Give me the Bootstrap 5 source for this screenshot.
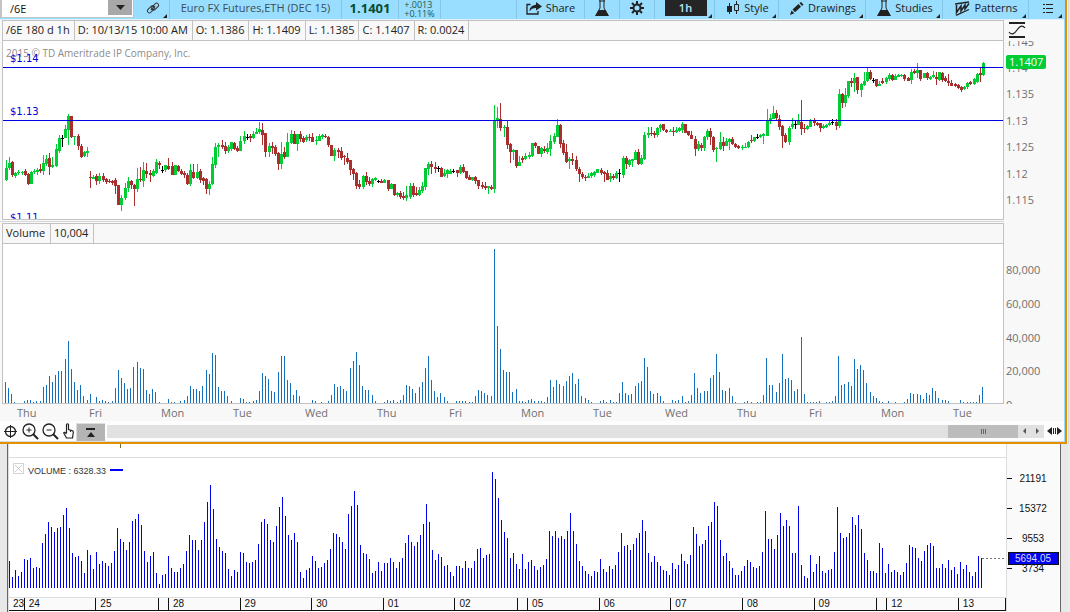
<!DOCTYPE html>
<html lang="en">
<head>
<meta charset="utf-8">
<meta name="viewport" content="width=device-width, initial-scale=1">
<title>/6E chart</title>
<link href="https://cdn.jsdelivr.net/npm/bootstrap@5.3.0/dist/css/bootstrap.min.css" rel="stylesheet">
<style>
  body { font-family: "Open Sans", sans-serif; font-size: 11px; line-height: 16px; color: #222; background: #ececec; overflow: hidden; }
  svg { display: block; flex: none; }
  svg.plot { width: 100%; shape-rendering: crispEdges; }
  .upper { border-right: 2px solid #e09000; border-bottom: 2px solid #e09000; margin-right: 3px; background: #f8f8f8; box-shadow: 1px 0 0 #f8f8f8, 2px 0 0 #d8d8d8; }
  .upper-inner { border-right: 1px solid #99ddff; }

  .toolbar { height: 20px; background: #99ddff; border-bottom: 1px solid #dff2fc; overflow: hidden; }
  .tool { height: 19px; padding: 0 0 3px; border: 0; border-right: 1px solid #83c6ea; background: transparent; color: #222; position: relative; display: flex; align-items: center; justify-content: center; line-height: 16px; white-space: nowrap; flex: none; }
  .tool.menu { padding-left: 2px; }
  .tool.menu::after { content: ""; position: absolute; right: 2px; bottom: 1px; border-left: 4px solid transparent; border-bottom: 4px solid #222; }
  .symbol-box { width: 134px; height: 18px; padding: 0 1px 1px 2px; background: #c4c4c4; }
  .symbol-box input { min-width: 0; width: 0; border: 0; padding: 0 0 0 8px; height: 17px; font-size: 11px; border-radius: 0; color: #111; outline: 0; background: #fff; }
  .symbol-box button { width: 25px; height: 17px; border: 1px solid #fff; border-width: 0 1px 2px 0; background: #a8a8a8; padding: 0; flex: none; }
  .quote-price { font-weight: 700; font-size: 13px; color: #064d2d; }
  .tool.quote-change { font-size: 9px; line-height: 9px; color: #1d5a48; padding-bottom: 2px; }
  .interval { background: #252525; color: #b5e5ff; width: 42px; height: 16px; text-align: center; line-height: 15px; font-weight: 600; }

  .head { height: 21px; border: 1px solid #c2c2c2; margin-left: 2px; background: #f8f8f8; }
  .head span { border-right: 1px solid #c2c2c2; padding: 0 4px 0 3px; line-height: 18px; white-space: nowrap; }
  .head.wide span { padding-right: 5px; }
  .pane { border-left: 1px solid #c2c2c2; border-right: 1px solid #c2c2c2; border-bottom: 1px solid #c2c2c2; background: #fff; position: relative; margin-left: 2px; }
  .over { position: absolute; left: 0; top: 0; width: 100%; height: 100%; pointer-events: none; }
  .scale { width: 60px; flex: none; }
  .scale text { fill: #707070; }
  .days { height: 17px; padding: 1px 0 0 17px; margin-right: 39px; color: #707070; }
  .scrollrow { height: 21px; background: #fdfdfd; border-bottom: 1px solid #d8dde0; }
  .iconbtn { border: 0; padding: 0; background: transparent; width: 20px; height: 20px; display: flex; align-items: center; justify-content: center; flex: none; }
  .track { height: 13px; background: #e1e1e1; }
  .thumb { width: 70px; height: 13px; background: #bcbcbc; }

  .lower { font-family: "Liberation Sans", sans-serif; font-size: 10px; line-height: 12px; color: #111; margin-right: 2px; background: #e8e8e8; }
  .lower-frame { margin: 0 7px 0 7px; border-left: 1px solid #666; border-right: 1px solid #666; background: #fafafa; }
  .lower-plot { background: #fff; border-right: 1px solid #ddd; border-left: 1px solid #ddd; min-width: 0; }
  .blank { height: 14px; border-bottom: 1px solid #ddd; padding-left: 111px; }
  .blank i { display: block; width: 1px; height: 4px; background: #6b6b2b; }
  .legend { padding: 5px 0 0 4px; gap: 4px; font-size: 9px; color: #333; }
  .legend span { padding-top: 2px; }
  .closebox { width: 11px; height: 11px; padding: 0; border: 1px solid #d4d4d4; background: #fff; }
  .dates { height: 14px; border-top: 1px solid #ddd; border-bottom: 1px solid #111; background: #fafafa; }
  .dates span { border-right: 1px solid #111; text-indent: 4px; flex-basis: 0; min-width: 0; overflow: hidden; }
</style>
</head>
<body>
<main>
<section class="upper" aria-label="Price chart">
<div class="upper-inner">
  <div class="toolbar d-flex">
    <div class="symbol-box d-flex flex-shrink-0">
      <input class="flex-grow-1" type="text" value="/6E" aria-label="Symbol">
      <button type="button" aria-label="Choose symbol"><svg class="mx-auto" width="9" height="5"><path d="M0 0h9L4.500 5z" fill="#222"/></svg></button>
    </div>
    <button class="tool menu" style="width:36px" type="button" aria-label="Link">
      <svg width="14" height="14" viewBox="0 0 14 14" fill="none" stroke="#333"><g transform="rotate(-45 7 7)"><rect x="0.500" y="4.500" width="8" height="4" rx="2"/><rect x="5.500" y="5.500" width="8" height="4" rx="2"/><path d="M4 7h6"/></g></svg>
    </button>
    <div class="tool" style="width:172px;color:#3c4d57">Euro FX Futures,ETH (DEC 15)</div>
    <div class="tool quote-price" style="width:57px">1.1401</div>
    <div class="tool quote-change" style="width:42px"><div>+.0013<br>+0.11%</div></div>
    <div class="tool flex-grow-1"></div>
    <button class="tool" style="width:68px" type="button">
      <svg class="me-1" width="16" height="13" viewBox="0 0 16 13"><path d="M4.500 2.500H1v9.500h11V9" fill="none" stroke="#222" stroke-width="1.300"/><path d="M10 0l6 4.500-6 4V6C7 6 5 7 3.500 9.500 3.500 5.500 6 3 10 2.700z" fill="#222"/></svg>Share
    </button>
    <button class="tool" style="width:35px" type="button" aria-label="Lab">
      <svg width="14" height="17" viewBox="0 0 14 17"><path d="M5 0v8L1 15.500h12L9 8V0" fill="none" stroke="#222"/><path d="M3.500 10h7L14 16H0z" fill="#222"/><path d="M4 1h6" stroke="#222"/></svg>
    </button>
    <button class="tool" style="width:35px" type="button" aria-label="Settings">
      <svg width="14" height="14" viewBox="0 0 14 14" fill="none" stroke="#222"><circle cx="7" cy="7" r="3.500" stroke-width="2"/><path d="M7 0v3M7 11v3M0 7h3M11 7h3M2 2l2 2M10 10l2 2M2 12l2-2M10 4l2-2" stroke-width="2"/></svg>
    </button>
    <button class="tool menu" style="width:60px" type="button"><span class="interval">1h</span></button>
    <button class="tool menu" style="width:64px" type="button">
      <svg class="me-1" width="14" height="14" viewBox="0 0 14 14"><path d="M3.500 2v11M10.500 0v3M10.500 9v4" stroke="#222"/><path d="M1 5h5v6H1z" fill="#222"/><path d="M8.500 3.500h4v6h-4z" fill="none" stroke="#222"/></svg>Style
    </button>
    <button class="tool menu" style="width:87px" type="button">
      <svg class="me-1" width="14" height="13" viewBox="0 0 14 13"><path d="M0 13l1.500-4.500 2.800 2.800zM2.500 7.500L8.500 2l2.500 2.700-6 5.500zM9.500 1L11 0l2.500 2.500L12 4z" fill="#222"/></svg>Drawings
    </button>
    <button class="tool menu" style="width:77px" type="button">
      <svg class="me-1" width="14" height="17" viewBox="0 0 14 17"><path d="M5 0v8L1 15.500h12L9 8V0" fill="none" stroke="#222"/><path d="M3.500 10h7L14 16H0z" fill="#222"/><path d="M4 1h6" stroke="#222"/></svg>Studies
    </button>
    <button class="tool menu" style="width:86px" type="button">
      <svg class="me-1" width="15" height="15" viewBox="0 0 15 15" fill="none" stroke="#222"><path d="M0 3L14 1M1 14.300L14 8.500" stroke-width="1.300"/><path d="M1.500 4v7.500L6 5v5L10 4v4l4-5.500" stroke-width="1.500"/></svg>Patterns
    </button>
    <button class="tool menu border-end-0" style="width:35px" type="button" aria-label="List">
      <svg width="10" height="10" stroke="#222" shape-rendering="crispEdges"><path d="M0 1.500h2M3 1.500h7M0 5.500h2M3 5.500h7M0 9.500h2M3 9.500h7"/></svg>
    </button>
  </div>

  <div class="d-flex">
    <div class="flex-grow-1" style="min-width:0">
      <div class="head d-flex">
        <span>/6E 180 d 1h</span><span>D: 10/13/15 10:00 AM</span><span>O: 1.1386</span><span>H: 1.1409</span><span>L: 1.1385</span><span>C: 1.1407</span><span>R: 0.0024</span>
      </div>
      <div class="pane">
        <svg id="price" class="plot" height="178" viewBox="3 -9 1000 178" preserveAspectRatio="none"></svg>
        <svg class="over">
          <text x="3" y="16" fill="#8c8c8c" font-size="10">2015 © TD Ameritrade IP Company, Inc.</text>
          <g fill="#0000d8" font-family="DejaVu Sans, sans-serif" font-size="10"><text x="7" y="21">$1.14</text><text x="7" y="74">$1.13</text><text x="7" y="180">$1.11</text></g>
        </svg>
      </div>
    </div>
    <svg class="scale" height="200">
      <path d="M5 3h16M5 17h16" stroke="#222" stroke-width="2"/><path d="M5 12c3 4 6 1 8-2s5-6 8-2" fill="none" stroke="#222" stroke-width="1.200"/>
      <svg y="21" height="179" width="60"><text x="2" y="5">1.145</text><text x="2" y="31">1.14</text></svg>
      <g><text x="2" y="78">1.135</text><text x="2" y="105">1.13</text><text x="2" y="131">1.125</text><text x="2" y="158">1.12</text><text x="2" y="184">1.115</text></g>
      <rect x="2" y="35" width="40" height="14" rx="2" fill="#00cc33"/><text x="5" y="46" style="fill:#fff">1.1407</text>
    </svg>
  </div>

  <div class="d-flex">
    <div class="flex-grow-1" style="min-width:0">
      <div style="height:3px" class="d-flex align-items-center"><div class="w-100" style="height:1px;background:#d8d8d8"></div></div>
      <div class="head wide d-flex"><span>Volume</span><span>10,004</span></div>
      <div class="pane"><svg id="volume" class="plot" height="159" viewBox="3 0 1000 159" preserveAspectRatio="none"></svg></div>
    </div>
    <svg class="scale" height="184"><text x="2" y="54">80,000</text><text x="2" y="88">60,000</text><text x="2" y="122">40,000</text><text x="2" y="155">20,000</text><text x="2" y="189">0</text></svg>
  </div>
  <div class="days d-flex">
    <span class="col">Thu</span><span class="col">Fri</span><span class="col">Mon</span><span class="col">Tue</span><span class="col">Wed</span><span class="col">Thu</span><span class="col">Fri</span><span class="col">Mon</span><span class="col">Tue</span><span class="col">Wed</span><span class="col">Thu</span><span class="col">Fri</span><span class="col">Mon</span><span class="col">Tue</span>
  </div>

  <div class="scrollrow d-flex align-items-center">
    <button class="iconbtn" type="button" aria-label="Crosshair"><svg width="13" height="13" fill="none" stroke="#222"><circle cx="6.500" cy="6.500" r="5" stroke-width="1.300"/><path d="M6.500 0v13M0 6.500h13"/></svg></button>
    <button class="iconbtn" type="button" aria-label="Zoom in"><svg width="17" height="17" fill="none" stroke="#222"><circle cx="7" cy="7" r="6" stroke-width="1.300"/><path d="M4.500 7h5M7 4.500v5"/><path d="M11 11l5 5" stroke-width="2"/></svg></button>
    <button class="iconbtn" type="button" aria-label="Zoom out"><svg width="17" height="17" fill="none" stroke="#222"><circle cx="7" cy="7" r="6" stroke-width="1.300"/><path d="M4.500 7h5"/><path d="M11 11l5 5" stroke-width="2"/></svg></button>
    <button class="iconbtn" type="button" aria-label="Pan" style="width:16px"><svg width="11" height="16" fill="none" stroke="#222" stroke-width="1.200"><path d="M3.500 10V1.500q1-1.500 2 0V6.500L9 7.500q1.500.5 1.300 2L9.500 15h-6L.700 10q.5-1.500 2.800.8M7.500 7v2"/></svg></button>
    <button class="iconbtn align-self-end" type="button" aria-label="Collapse" style="width:29px;height:18px;background:#b4b4b4;border:solid #ddd;border-width:1px 0 0 1px"><svg width="10" height="9"><path d="M0 1h9" stroke="#222" stroke-width="2"/><path d="M1 9h8L5 4z" fill="#222"/></svg></button>
    <div class="track d-flex flex-grow-1 justify-content-end" style="margin-left:2px" role="scrollbar" aria-controls="price" aria-valuenow="100">
      <div class="thumb d-flex align-items-center justify-content-center"><svg width="5" height="5" stroke="#666" shape-rendering="crispEdges"><path d="M.5 0v5M2.500 0v5M4.500 0v5"/></svg></div>
    </div>
    <button class="iconbtn track" type="button" aria-label="Scroll left" style="width:13px;height:13px;background:#e1e1e1"><svg width="3" height="6"><path d="M3 0v6L0 3z" fill="#555"/></svg></button>
    <button class="iconbtn track" type="button" aria-label="Scroll right" style="width:13px;height:13px;background:#e1e1e1"><svg width="3" height="6"><path d="M0 0v6l3-3z" fill="#555"/></svg></button>
    <button class="iconbtn" type="button" aria-label="Expand"><svg width="15" height="10"><path d="M5 1v8L0 5zM10 1v8l5-4z" fill="#222"/><path d="M6.500 2v6M8.500 2v6" stroke="#222"/></svg></button>
  </div>
</div>
</section>

<section class="lower" aria-label="Volume study">
  <div class="lower-frame d-flex">
    <div class="lower-plot flex-grow-1">
      <div class="blank"><i></i></div>
      <div class="position-relative">
        <svg id="study" class="plot" height="139" viewBox="9 0 997 139" preserveAspectRatio="none"></svg>
        <div class="over legend d-flex align-items-start">
          <button class="closebox" type="button" aria-label="Remove study"><svg width="9" height="9" stroke="#ccc"><path d="M1 1l7 7M8 1L1 8"/></svg></button>
          <span>VOLUME : 6328.33</span>
          <svg width="13" height="12"><path d="M0 7h13" stroke="#0000f0" stroke-width="2"/></svg>
        </div>
      </div>
      <div class="dates d-flex" id="dates"></div>
    </div>
    <svg width="53" height="168" shape-rendering="crispEdges">
      <path d="M0 34.500h5M0 64.500h5M0 94.500h5M0 124.500h5" stroke="#111"/>
      <g text-anchor="middle" fill="#111"><text x="26" y="38">21191</text><text x="26" y="68">15372</text><text x="26" y="98">9553</text><text x="26" y="128">3734</text>
      <rect x="1.500" y="108.500" width="50" height="12" fill="#0000f0" stroke="#111"/><text x="26" y="118" fill="#dde">5694.05</text></g>
    </svg>
  </div>
</section>
</main>

<script>
// Candles: direction (G up, R down, K flat), x, high, body top, body bottom, low
const candles = `G 6 110 118 130 131;G 9 107 113 118 120;R 12 111 112 125 127;G 15 122 123 126 128;G 18 120 122 123 125;G 22 121 122 123 125;R 25 119 121 125 126;R 28 123 124 134 135;G 31 121 122 134 134;G 34 119 121 122 124;G 37 118 120 122 125;R 40 114 119 121 123;G 43 105 113 121 125;G 46 105 109 114 116;R 49 103 108 117 125;G 52 107 115 117 118;G 56 94 99 116 117;G 59 85 88 101 103;K 62 85 88 89 97;G 65 75 79 88 88;G 68 64 66 80 95;R 71 66 66 87 88;G 74 86 86 87 95;R 78 84 86 96 100;R 81 94 96 107 108;G 84 101 102 106 107;G 87 97 101 103 107;
R 90 121 127 128 138;G 93 125 127 129 129;R 96 124 126 131 135;G 99 123 126 131 134;R 103 123 126 130 132;R 106 128 129 132 134;R 109 129 131 132 133;R 112 130 131 133 135;R 115 128 130 136 144;R 118 135 135 155 155;G 121 145 148 155 161;G 125 133 138 148 150;G 128 127 131 138 142;R 131 130 131 135 139;R 134 134 135 139 156;G 137 118 129 139 142;R 140 117 129 130 132;G 143 112 120 131 137;R 146 113 121 124 128;R 150 120 123 125 132;G 153 119 121 126 127;G 156 109 112 123 124;R 159 111 113 115 119;K 162 116 120 121 123;G 165 115 115 120 122;R 168 108 116 119 120;R 172 112 116 125 125;G 175 115 115 125 125;R 178 115 116 121 122;R 181 119 121 124 125;R 184 121 123 125 128;R 187 123 125 134 135;G 190 114 120 134 136;R 193 114 122 128 129;G 197 114 122 128 129;R 200 119 121 130 133;R 203 127 128 131 135;R 206 128 129 139 144;G 209 131 134 139 145;G 212 107 114 134 135;G 215 93 97 115 118;G 218 93 95 97 107;R 222 90 95 97 99;R 225 92 96 101 104;G 228 95 97 101 103;G 231 92 92 99 101;R 234 92 93 99 100;R 237 96 98 101 102;G 240 86 91 101 101;G 244 81 86 91 94;K 247 84 87 88 90;R 250 84 86 88 92;G 253 81 84 88 89;G 256 78 82 84 84;G 259 72 79 82 84;R 262 73 80 85 95;R 265 83 83 102 107;G 269 93 96 102 107;R 272 92 96 98 104;R 275 95 97 104 106;R 278 102 103 114 120;G 281 92 104 114 119;R 284 97 102 107 109;G 287 83 92 107 107;G 291 80 84 93 94;R 294 81 84 94 94;G 297 84 84 94 101;R 300 81 84 89 92;R 303 86 88 92 93;G 306 85 87 90 92;R 309 84 87 88 91;R 312 83 87 92 92;G 316 86 90 91 95;G 319 84 86 91 91;G 322 84 85 87 89;R 325 84 86 87 88;R 328 86 87 95 97;R 331 95 95 106 106;G 334 98 100 106 111;R 338 98 100 102 108;
R 341 97 101 108 110;R 344 105 106 107 115;R 347 103 108 112 114;R 350 110 110 120 125;R 353 118 119 124 130;R 356 122 123 136 139;R 359 130 134 137 139;G 363 125 126 137 139;R 366 122 126 132 135;R 369 127 131 134 136;G 372 128 129 134 137;G 375 127 128 130 131;K 378 130 131 132 133;R 381 129 131 133 133;G 384 129 130 133 133;R 388 130 130 139 141;G 391 133 134 139 139;R 394 134 134 145 146;G 397 142 143 145 147;R 400 141 143 147 149;R 403 142 146 148 150;G 406 136 145 148 151;G 410 133 136 147 149;R 413 133 136 145 147;R 416 137 143 145 146;G 419 137 140 145 146;G 422 132 136 141 143;G 425 118 118 137 140;G 428 112 114 119 125;R 431 111 114 117 124;R 435 112 117 119 123;K 438 116 118 119 122;R 441 117 118 127 127;G 444 119 123 126 127;G 447 119 120 124 128;G 450 119 121 124 124;K 453 119 121 122 123;R 457 120 120 123 127;G 460 115 117 123 124;R 463 114 117 122 123;R 466 121 121 128 129;R 469 125 127 130 130;G 472 127 127 130 131;R 475 126 127 131 134;R 478 130 130 136 139;R 482 132 135 137 139;R 485 132 136 138 140;G 488 136 136 138 144;R 491 135 137 139 140;G 494 55 70 139 143;G 497 57 68 71 78;R 500 53 69 78 81;G 504 75 77 78 87;R 507 71 77 95 99;R 510 93 94 102 113;G 513 99 100 102 110;R 516 100 100 116 118;G 519 106 112 116 116;R 522 106 108 110 113;G 525 103 106 109 110;G 529 102 105 107 109;G 532 93 93 106 107;R 535 92 93 96 98;R 538 96 96 104 104;G 541 97 98 104 107;R 544 96 99 101 103;G 547 93 98 102 104;G 550 85 91 99 106;G 554 83 86 92 94;G 557 69 75 87 87;R 560 74 75 94 98;R 563 90 93 103 105;R 566 94 102 112 113;G 569 107 109 111 119;R 572 103 109 111 115;R 576 106 110 119 121;R 579 117 119 124 132;R 582 122 124 127 129;R 585 125 127 128 131;G 588 123 126 128 128;G 591 122 123 126 128;G 594 121 122 125 127;G 597 119 119 123 123;R 601 118 120 123 125;R 604 121 122 124 132;R 607 120 123 130 130;G 610 123 126 129 132;R 613 124 126 128 130;G 616 121 123 128 129;K 619 119 123 124 132;G 623 106 108 125 128;R 626 106 108 114 119;G 629 109 110 115 117;G 632 109 109 111 117;G 635 100 102 110 110;R 638 99 102 114 115;G 641 105 108 114 115;G 644 82 85 109 110;G 648 77 83 85 88;R 651 77 83 84 86;R 654 81 83 85 88;G 657 77 78 85 87;G 660 74 75 78 82;R 663 74 74 80 81;
R 666 79 80 82 83;G 670 79 81 82 82;R 673 77 81 82 86;G 676 77 80 82 83;G 679 77 78 81 82;G 682 72 74 80 83;R 685 74 74 83 83;R 688 81 81 85 86;R 691 81 85 89 89;R 695 86 89 99 106;G 698 91 94 99 101;R 701 93 95 98 101;G 704 86 87 98 101;G 707 79 81 87 90;R 710 78 81 87 95;R 713 86 87 100 102;G 716 97 98 99 112;G 720 82 92 99 100;R 723 87 92 96 101;G 726 88 91 96 96;G 729 88 89 92 100;R 732 87 89 94 95;R 735 93 94 97 98;R 738 95 96 98 99;G 742 95 97 98 100;G 745 93 97 98 98;G 748 91 92 97 98;R 751 85 90 91 93;G 754 87 87 91 92;K 757 84 87 88 89;G 760 84 85 87 88;G 763 83 84 86 94;G 767 59 70 86 86;G 770 64 68 70 74;G 773 56 63 69 69;R 776 60 63 68 71;R 779 65 69 77 80;R 782 75 76 86 98;R 785 83 85 92 93;G 789 76 78 92 95;G 792 68 74 77 79;K 795 71 74 75 79;G 798 64 71 75 75;R 801 50 72 79 85;R 804 74 78 79 83;G 807 75 76 79 80;G 810 69 71 77 77;R 814 68 71 73 76;R 817 72 73 75 76;R 820 73 73 78 82;G 823 74 76 78 79;G 826 74 75 77 78;G 829 70 73 75 76;K 832 69 72 73 75;R 836 69 72 76 80;G 839 39 44 76 78;R 842 43 44 53 58;G 845 38 45 53 57;G 848 31 31 46 48;R 851 28 31 33 37;G 854 23 28 33 42;R 857 27 27 40 44;G 861 33 34 40 47;G 864 22 31 35 36;G 867 18 22 31 32;R 870 20 22 29 30;K 873 28 30 31 33;R 876 29 29 36 37;G 879 31 34 36 36;R 882 28 31 33 34;G 886 27 28 32 34;G 889 23 25 29 31;R 892 24 25 30 31;G 895 24 26 30 30;G 898 24 25 27 27;G 901 24 25 26 27;R 904 24 25 29 31;R 908 27 28 31 31;G 911 19 22 30 34;R 914 19 21 23 24;G 917 13 20 23 28;R 920 20 20 29 31;G 924 23 23 28 28;R 927 22 23 28 30;G 930 26 27 29 30;G 933 21 25 27 28;R 936 22 27 29 35;G 939 22 22 30 31;R 942 22 23 30 32;R 945 26 28 31 32;R 948 24 31 33 36;R 951 30 33 36 36;R 955 33 34 36 37;R 958 34 35 38 39;R 961 36 37 40 42;G 964 36 37 39 40;G 967 32 33 37 39;R 970 31 32 34 35;G 974 28 29 34 35;G 977 23 24 32 33;R 980 18 23 25 32;G 983 12 13 25 26`;

// Hourly volume: x:height
const volume = `5:21 8:15 11:9 14:1 24:2 27:3 30:3 33:1 36:2 40:2 43:16 46:18 49:27 52:21 55:28 58:32 61:32 65:44 68:62 71:34 74:21 77:13 80:18 83:7 87:3 90:9 96:6 99:2 102:3 105:2 108:1 112:2 115:15 118:33 121:25 124:20 127:14 130:15 133:36 137:41 140:35 143:34 146:13 149:9 152:14 155:11 159:1 168:4 171:1 174:1 180:2 184:3 187:7 190:17 193:14 196:14 199:12 202:17 206:33 209:29 212:50 215:48 218:16 221:12 224:12 227:7 231:2 240:5 243:4 246:1 249:1 253:2 256:3 259:12 262:30 265:27 268:24 271:12 274:11 278:31 281:47 284:47 287:23 290:20 293:8 296:13 299:7 312:3 315:2 321:1 328:2 331:8 334:19 337:16 340:17 343:14 346:12 350:35 353:42 356:51 359:38 362:17 365:13 368:13 372:8 375:2 384:1 387:3 390:2 393:3 397:1 400:3 403:8 406:18 409:17 412:14 415:10 419:16 422:21 425:35 428:47 431:23 434:12 437:6 440:10 444:6 447:2 456:2 459:2 462:2 465:2 469:1 472:1 475:7 478:13 481:12 484:10 487:8 491:7 494:154 497:77 500:54 503:33 506:31 509:31 512:11 516:14 519:2 522:2 525:1 528:3 531:4 534:2 538:2 541:2 544:1 547:6 550:23 553:16 556:23 559:19 563:17 566:22 569:27 572:30 575:19 578:24 581:7 585:5 588:3 591:1 600:2 603:3 606:1 610:3 613:1 616:1 619:10 622:21 625:10 628:8 631:9 635:17 638:20 641:22 644:45 647:36 650:12 653:9 657:10 660:7 663:2 672:3 675:2 678:3 682:7 685:1 688:2 691:8 694:30 697:15 700:10 704:12 707:12 710:25 713:28 716:49 719:31 722:13 725:12 729:15 732:7 735:1 744:1 747:2 751:1 757:1 760:1 763:8 766:45 769:18 772:18 776:11 779:20 782:49 785:24 788:25 791:23 794:12 797:14 801:66 804:9 807:1 810:1 813:1 816:1 819:2 826:1 829:1 832:2 835:7 838:47 841:18 844:19 848:21 851:17 854:44 857:34 860:38 863:33 866:20 870:11 873:7 876:5 879:2 882:1 888:2 895:1 904:1 907:4 910:10 913:9 917:9 920:8 923:4 926:10 929:8 932:15 935:12 938:5 942:3 945:3 948:2 960:3 963:1 967:1 970:1 973:1 976:1 979:8 982:16`;

// Volume study: one bar every 3 units
const study = `27 11 18 12 16 29 28 30 20 21 20 45 54 66 61 56 60 61 73 80 60 35 31 32 27 15 38 33 19 36 24 27 25 22 25 37 60 49 46 38 46 67 69 74 63 37 26 32 36 15 4 13 14 32 20 16 16 20 24 37 53 48 48 38 48 66 86 103 79 49 41 37 35 19 12 18 16 36 35 26 25 26 28 44 66 69 64 48 46 62 81 91 72 53 48 55 46 16 10 18 20 32 27 20 21 25 28 39 55 54 51 46 39 74 82 97 83 43 35 34 29 15 17 26 17 25 25 30 26 20 26 30 45 53 46 42 46 53 64 84 66 38 28 34 31 22 23 16 12 22 22 20 27 20 20 27 39 40 30 33 34 116 109 90 68 56 50 30 35 24 19 34 19 26 28 22 18 21 23 29 57 52 57 50 52 49 57 75 57 44 27 22 17 14 12 17 16 29 19 16 22 19 23 36 55 42 43 38 44 50 55 68 57 35 26 32 26 22 18 17 13 25 19 23 34 27 24 33 61 54 42 44 48 62 66 86 82 48 32 35 27 20 13 13 17 22 28 26 21 20 22 36 77 49 49 39 53 75 62 68 62 35 35 82 23 12 10 33 16 24 32 17 15 18 19 36 81 55 50 51 55 71 63 73 59 35 28 17 17 15 45 40 15 24 16 18 16 13 16 25 43 41 40 30 27 37 43 45 42 20 20 24 20 28 18 21 14 26 19 23 16 12 16 32 30`;

const rect = (x, y, w, h, f) => `<rect x="${x}" y="${y}" width="${w}" height="${h}" fill="${f}"/>`;
const tone = { G: '#00cc33', R: '#aa2e2e', K: '#000' };
document.getElementById('price').innerHTML = candles.split(';').map(c => {
  const p = c.trim().split(' '), [x, hi, t, b, lo] = p.slice(1).map(Number), f = tone[p[0]];
  return rect(x, hi, 1, lo - hi, f) + rect(x - 1, t, 3, Math.max(1, b - t), f);
}).join('') + rect(3, 17, 1000, 1, '#0000e6') + rect(3, 70, 1000, 1, '#0000e6');
document.getElementById('volume').innerHTML = volume.split(' ').map(v => {
  const [x, h] = v.split(':').map(Number);
  return rect(x, 159 - h, 1, h, '#1470bd');
}).join('');
document.getElementById('study').innerHTML = study.split(' ').map((h, i) => rect(9 + i * 3, 130 - h, 1, h, '#0000f0')).join('')
  + '<path d="M982 100.500H1006" stroke="#777" stroke-dasharray="2 2"/>';
document.getElementById('dates').innerHTML =
  [['23',15],['24',72],['25',63],['',9],['28',72],['29',72],['30',72],['01',72],['02',63],['',9],['05',72],['06',72],['07',72],['08',72],['09',63],['',9],['12',72],['13',47]]
  .map(([d, w]) => `<span style="flex-grow:${w}">${d}</span>`).join('');
</script>
<script src="https://cdn.jsdelivr.net/npm/bootstrap@5.3.0/dist/js/bootstrap.bundle.min.js"></script>
</body>
</html>
